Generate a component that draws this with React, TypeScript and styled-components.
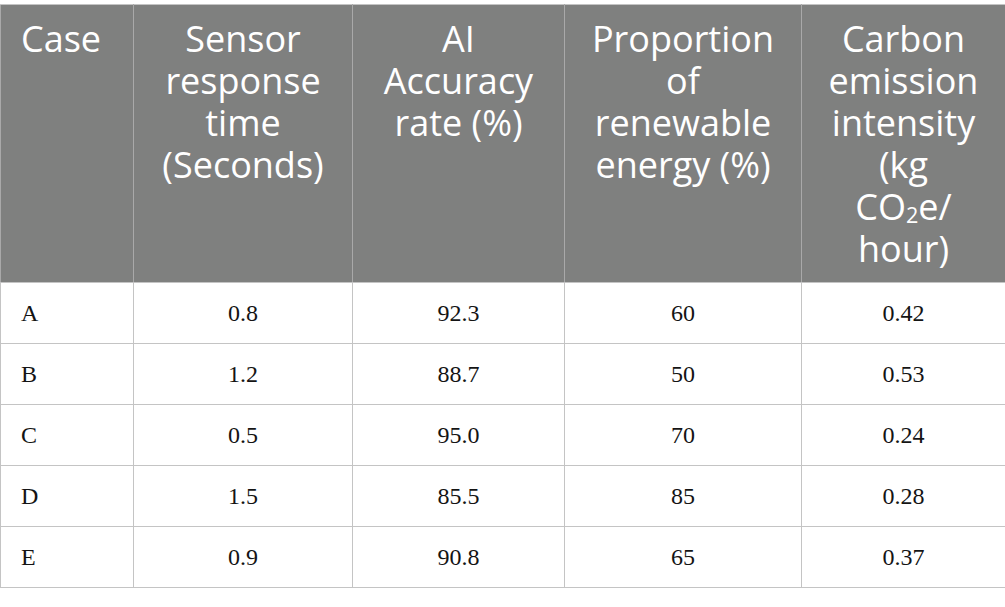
import React from "react";
import styled, { createGlobalStyle } from "styled-components";

const GlobalStyle = createGlobalStyle`
  body {
    margin: 0;
    padding-top: 4px;
    background: #ffffff;
  }
`;

const Table = styled.table`
  width: 1005px;
  table-layout: fixed;
  border-collapse: collapse;
  border: 1px solid #c4c4c4;
`;

const HeadCell = styled.th<{ $align?: string }>`
  background-color: #7f807f;
  color: #ffffff;
  font-family: "Open Sans", "Liberation Sans", sans-serif;
  font-weight: 400;
  font-size: 36px;
  line-height: 42px;
  text-align: ${(p) => p.$align || "center"};
  vertical-align: top;
  padding: 13px 20px 0;
  height: 264px;
  border: 1px solid #a9a9a9;
  border-top-color: #c4c4c4;
  border-bottom-color: #c4c4c4;
`;

const Cell = styled.td<{ $align?: string }>`
  font-family: "Liberation Serif", "Times New Roman", serif;
  font-size: 24px;
  color: #141414;
  text-align: ${(p) => p.$align || "center"};
  vertical-align: middle;
  padding: 0 20px;
  height: 60px;
  border: 1px solid #c4c4c4;
`;

const Sub = styled.sub`
  font-size: 0.6em;
  line-height: 0;
  vertical-align: -0.15em;
`;

const widths = [133, 219, 212, 237, 204];

const rows = [
  ["A", "0.8", "92.3", "60", "0.42"],
  ["B", "1.2", "88.7", "50", "0.53"],
  ["C", "0.5", "95.0", "70", "0.24"],
  ["D", "1.5", "85.5", "85", "0.28"],
  ["E", "0.9", "90.8", "65", "0.37"],
];

export default function App() {
  return (
    <>
      <GlobalStyle />
      <Table>
        <colgroup>
          {widths.map((w, i) => (
            <col key={i} style={{ width: w }} />
          ))}
        </colgroup>
        <thead>
          <tr>
            <HeadCell $align="left">Case</HeadCell>
            <HeadCell>Sensor response time (Seconds)</HeadCell>
            <HeadCell>AI Accuracy rate (%)</HeadCell>
            <HeadCell>Proportion of renewable energy (%)</HeadCell>
            <HeadCell>
              Carbon emission intensity (kg
              <br />
              CO<Sub>2</Sub>e/ hour)
            </HeadCell>
          </tr>
        </thead>
        <tbody>
          {rows.map((r) => (
            <tr key={r[0]}>
              {r.map((v, i) => (
                <Cell key={i} $align={i === 0 ? "left" : "center"}>
                  {v}
                </Cell>
              ))}
            </tr>
          ))}
        </tbody>
      </Table>
    </>
  );
}
